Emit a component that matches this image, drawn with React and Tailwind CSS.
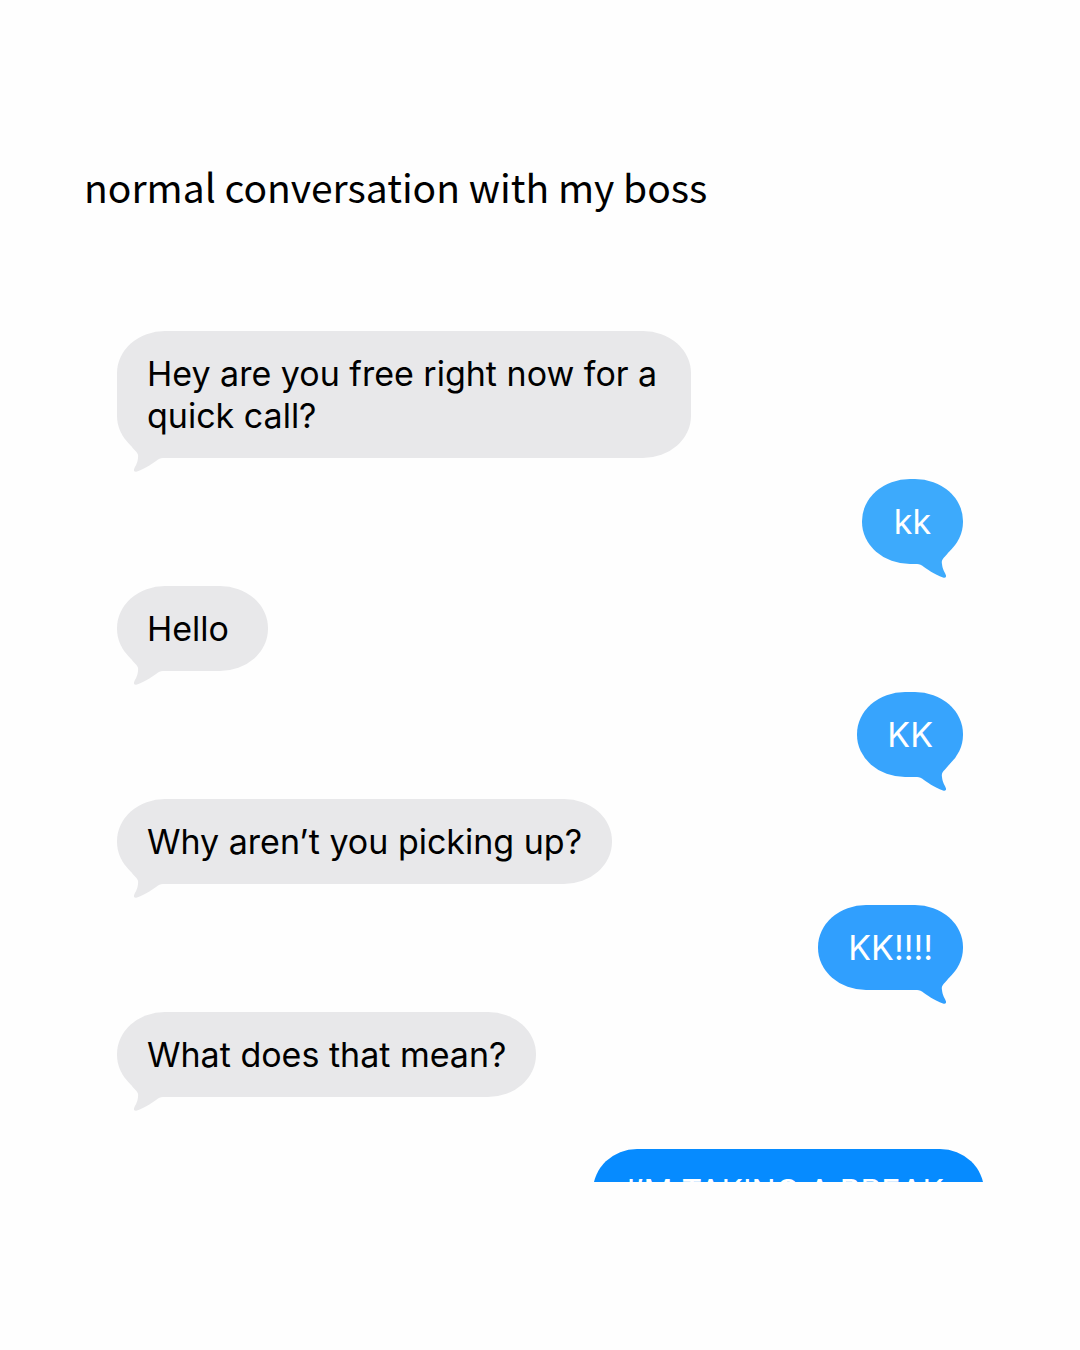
const messages = [
  { from: "boss", text: "Hey are you free right now for a quick call?" },
  { from: "me", text: "kk", fill: "bg-[#3daafc]", tail: "text-[#3daafc]" },
  { from: "boss", text: "Hello" },
  { from: "me", text: "KK", fill: "bg-[#37a4fd]", tail: "text-[#37a4fd]" },
  { from: "boss", text: "Why aren’t you picking up?" },
  { from: "me", text: "KK!!!!", fill: "bg-[#309ffe]", tail: "text-[#309ffe]" },
  { from: "boss", text: "What does that mean?" },
];

function Tail({ className }) {
  return (
    <svg aria-hidden="true" viewBox="0 0 48 38" className={`absolute -bottom-4 h-[38px] w-12 ${className}`}>
      <path
        fill="currentColor"
        d="M10 2C12 8 15 11 18 14.5C21 17.5 21.5 19 21 22C20.5 28 18 30 17 33.5C16.7 35.5 18 36.2 20 35.5C29 32.5 36 27 41 23.5C43 22.3 45 22 48 22V2Z"
      />
    </svg>
  );
}

function Incoming({ text }) {
  return (
    <li className="relative mb-[21px] min-w-[151px] max-w-[574px] self-start rounded-[48px/42px] bg-[#e8e8ea] px-[30px] pt-[22px] pb-[21px] text-black">
      <p>{text}</p>
      <Tail className="left-0 text-[#e8e8ea]" />
    </li>
  );
}

function Outgoing({ text, fill, tail }) {
  return (
    <li className={`relative mb-[22px] min-w-[101px] self-end rounded-[48px/42px] px-[30px] pt-[22px] pb-[21px] text-center text-white ${fill}`}>
      <p>{text}</p>
      <Tail className={`right-0 -scale-x-100 ${tail}`} />
    </li>
  );
}

export default function App() {
  return (
    <main className="min-h-screen bg-[#fefefe] pt-[158px] pb-[168px]">
      <h1 className="px-[84px] font-['Noto_Sans_CJK_SC',sans-serif] text-[39px] leading-[56px] text-black">
        normal conversation with my boss
      </h1>
      <section aria-label="Conversation" className="mt-[117px] font-['Inter',sans-serif] text-[34px] leading-[42px]">
        <ul className="flex flex-col pr-[117px] pl-[117px]">
          {messages.map((m) =>
            m.from === "boss" ? <Incoming key={m.text} {...m} /> : <Outgoing key={m.text} {...m} />
          )}
        </ul>
        <div className="mt-[31px] flex h-[33px] justify-end overflow-hidden pr-24">
          <p className="h-[85px] rounded-[44px/42px] bg-[#068bff] pt-[22px] pr-10 pl-[34px] text-[32px] whitespace-nowrap text-white">
            I’M TAKING A BREAK
          </p>
        </div>
      </section>
    </main>
  );
}
